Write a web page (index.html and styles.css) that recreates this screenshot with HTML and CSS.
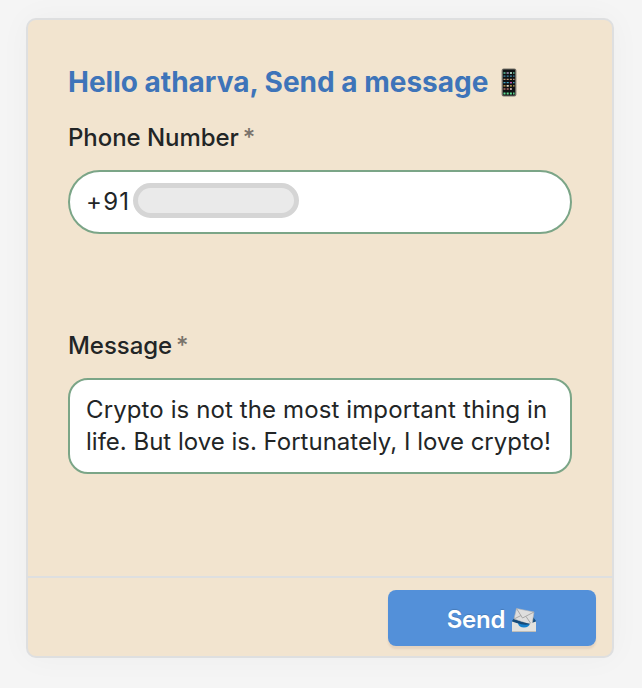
FILE: index.html
```html
<!DOCTYPE html>
<html lang="en">
<head>
<meta charset="utf-8">
<title>Send a message</title>
<link rel="stylesheet" href="styles.css">
</head>
<body>
<form class="card">
  <div class="card-body">
    <h1 class="title"><span class="title-text">Hello atharva, Send a message</span>
      <svg class="phone" viewBox="0 0 16 29" aria-hidden="true">
        <rect x="1.2" y="1" width="13.6" height="27" rx="1.4" fill="#101214" stroke="#77746c" stroke-width="1.2"/>
        <g stroke-width="1.3" stroke-dasharray="2 1.2" fill="none">
          <path d="M2.5 5h11" stroke="#62c8a1"/>
          <path d="M2.5 8.2h11" stroke="#408dad"/>
          <path d="M2.5 11.4h11" stroke="#c39a77"/>
          <path d="M2.5 14.6h11" stroke="#45a8ca"/>
          <path d="M2.5 17.8h11" stroke="#d7b75a"/>
          <path d="M2.5 21h8" stroke="#b4746c"/>
          <path d="M2.5 25.5h11" stroke="#60dc91" stroke-width="1.8"/>
        </g>
        <g fill="#eee"><path d="M9 4.4h2v1.2H9zM5.7 17.2h2v1.2h-2zM9 20.4h2v1.2H9z"/></g>
        <g fill="#bf4fae"><path d="M5.7 4.4h2v1.2h-2zM9 14h2v1.2H9z"/></g>
      </svg>
    </h1>
    <div class="label phone-label"><span>Phone Number</span><span class="required">*</span></div>
    <div class="field phone-field"><span class="prefix">+91</span><span class="redacted"></span></div>
    <div class="label message-label"><span>Message</span><span class="required">*</span></div>
    <div class="field message-field"><span class="first-line">Crypto is not the most important thing in</span><br>life. But love is. Fortunately, I love crypto!</div>
  </div>
  <div class="card-footer">
    <button class="send" type="button"><span class="send-text">Send</span>
      <svg class="mail" viewBox="0 0 26 26" aria-hidden="true">
        <path d="M1 14l3-4h18l3 4v5H1z" fill="#174f7e"/>
        <path d="M5.5 1.5L23 5l-2 13L3 12z" fill="#dedede" stroke="#b5b5b5" stroke-width=".6"/>
        <path d="M5.5 1.5L11.5 11 23 5M3 12l7-3.5M20.5 17.5L15 9.5" fill="none" stroke="#a2a2a2" stroke-width=".9"/>
        <path d="M3 12.5q8 3.500 17 4.500l4-3v4H5z" fill="#174a78"/>
        <path d="M6 16q7 3 14 1l-1 5H7z" fill="#1682cf"/>
        <path d="M1 14.500l6 2q1 4 6 4t6-4l6-2V25H1z" fill="#e3e2de"/>
        <path d="M1 24.500h24" stroke="#bfbdb8"/>
      </svg>
    </button>
  </div>
</form>
</body>
</html>
```
FILE: styles.css
```css
* { box-sizing: border-box; }

body {
  margin: 0;
  padding: 18px 28px 30px 26px;
  height: 688px;
  background: #f5f5f5;
  font-family: Inter, sans-serif;
  color: #222526;
  overflow: hidden;
}

.card {
  display: flex;
  flex-direction: column;
  width: 588px;
  height: 640px;
  border: 2px solid #dedfe0;
  border-radius: 10px;
  background: #f2e4cf;
  box-shadow: 0 0 32px rgba(0, 0, 0, .035);
}

.card-body {
  height: 556px;
  padding: 44px 40px 0;
}

.title {
  display: flex;
  align-items: center;
  gap: 12px;
  margin: 0;
  height: 36px;
  font-size: 28px;
  line-height: 36px;
  font-weight: 700;
  color: #3e74b9;
  white-space: nowrap;
}

.title-text { width: 421px; }

.phone { width: 16px; height: 29px; flex: none; }

.label {
  display: flex;
  gap: 4px;
  height: 32px;
  font-size: 24px;
  line-height: 32px;
  font-weight: 500;
  letter-spacing: -.05px;
}

.required { color: #79736b; }

.phone-label { margin-top: 22px; }

.message-label { margin-top: 96px; }

.field {
  margin-top: 16px;
  border: 2px solid #7ba587;
  background: #fff;
  font-size: 24px;
  line-height: 32px;
}

.phone-field {
  display: flex;
  align-items: center;
  gap: 2px;
  height: 64px;
  padding: 0 16px;
  border-radius: 32px;
}

.prefix { width: 45px; letter-spacing: 1.3px; }

.redacted {
  width: 166px;
  height: 35px;
  margin-top: -3px;
  border: 5px solid #d5d5d5;
  border-radius: 18px;
  background: #eaeaea;
}

.message-field {
  height: 96px;
  padding: 14px 16px;
  border-radius: 20px;
  white-space: nowrap;
}

.first-line { letter-spacing: .11px; }

.card-footer {
  display: flex;
  flex: none;
  justify-content: flex-end;
  height: 80px;
  padding: 12px 16px 0;
  border-top: 2px solid #dedfe0;
}

.send {
  display: flex;
  align-items: center;
  justify-content: center;
  gap: 6px;
  width: 208px;
  height: 56px;
  padding: 4px 0 0;
  border: 0;
  border-radius: 8px;
  background: #5390d9;
  box-shadow: 0 3px 2px rgba(90, 40, 40, .09);
  color: #fff;
  font: 600 24px/32px Inter, sans-serif;
  text-shadow: 0 -1px 1px rgba(0, 0, 0, .14);
}

.send-text { letter-spacing: -.2px; }

.mail { width: 26px; height: 26px; }
```
